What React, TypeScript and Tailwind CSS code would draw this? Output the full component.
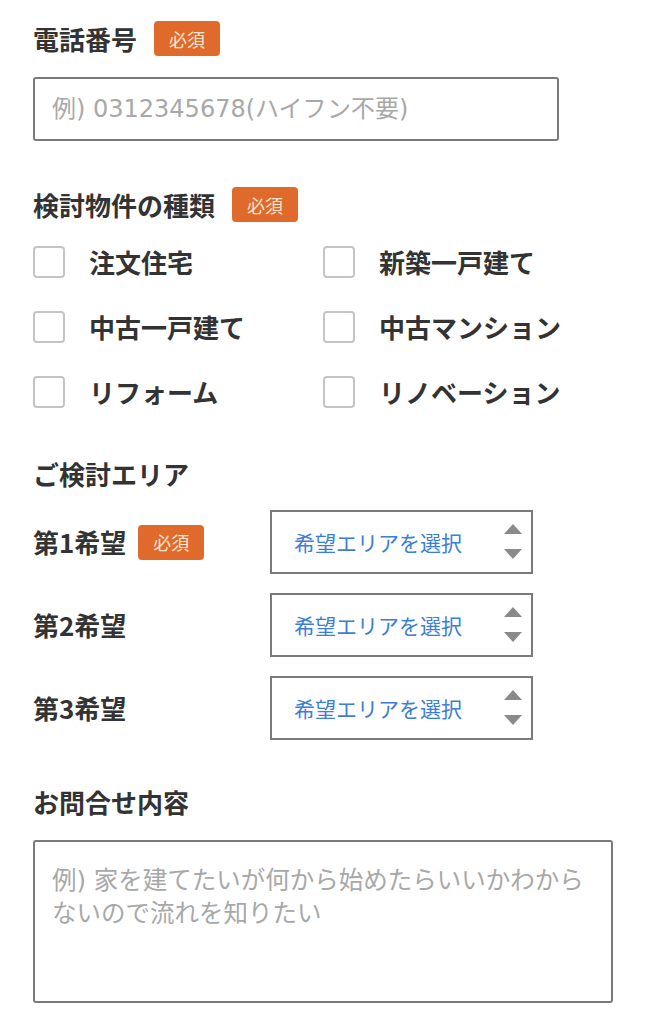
import React from "react";

const font = { fontFamily: '"Noto Sans CJK JP", "Noto Sans", sans-serif' };
const phFont = { fontFamily: '"DejaVu Sans", "Noto Sans CJK JP", sans-serif' };

function Badge() {
  return (
    <span className="inline-flex h-[35px] w-[66px] items-center justify-center rounded-[4px] bg-[#e06a2c] text-[18px] leading-none text-[#fde6d3]">
      必須
    </span>
  );
}

function Checkbox({ label }: { label: string }) {
  return (
    <label className="flex h-[65px] items-center">
      <span className="h-[32px] w-[32px] shrink-0 rounded-[4px] border-[2px] border-[#c4c4c4] bg-white" />
      <span className="ml-[24px] text-[26px] font-bold leading-none text-[#333]">{label}</span>
    </label>
  );
}

function Select() {
  return (
    <div className="flex h-[64px] w-[263px] items-center justify-between border-[2px] border-[#7a7a7a] bg-white pl-[22px] pr-[9px]">
      <span className="text-[21px] leading-none text-[#3b7ed6]">希望エリアを選択</span>
      <svg width="18" height="36" viewBox="0 0 18 36">
        <polygon points="9,0 18,10 0,10" fill="#8a8a8a" />
        <polygon points="0,25 18,25 9,35" fill="#8a8a8a" />
      </svg>
    </div>
  );
}

export default function App() {
  const items = ["注文住宅", "新築一戸建て", "中古一戸建て", "中古マンション", "リフォーム", "リノベーション"];
  return (
    <div className="min-h-[1024px] w-[646px] bg-white pl-[33px] pt-[21px]" style={font}>
      <div className="flex items-center">
        <span className="text-[26px] font-bold leading-none text-[#333]">電話番号</span>
        <span className="ml-[17px]"><Badge /></span>
      </div>
      <input
        className="mt-[21px] block h-[64px] w-[526px] rounded-[3px] border-[2px] border-[#7a7a7a] bg-white px-[17px] text-[24px] text-[#333] outline-none placeholder:text-[#a8a8a8]"
        style={phFont}
        placeholder="例) 0312345678(ハイフン不要)"
      />

      <div className="mt-[46px] flex items-center">
        <span className="text-[26px] font-bold leading-none text-[#333]">検討物件の種類</span>
        <span className="ml-[17px]"><Badge /></span>
      </div>
      <div className="mt-[7px] grid w-[580px] grid-cols-[290px_290px]">
        {items.map((t) => (
          <Checkbox key={t} label={t} />
        ))}
      </div>

      <div className="mt-[37px] text-[26px] font-bold leading-none text-[#333]">ご検討エリア</div>

      <div className="mt-[23px] flex flex-col gap-[19px]">
        {["第1希望", "第2希望", "第3希望"].map((t, i) => (
          <div key={t} className="flex items-center">
            <div className="flex w-[237px] items-center">
              <span className="text-[26px] font-bold leading-none text-[#333]">{t}</span>
              {i === 0 && <span className="ml-[12px]"><Badge /></span>}
            </div>
            <Select />
          </div>
        ))}
      </div>

      <div className="mt-[49px] text-[26px] font-bold leading-none text-[#333]">お問合せ内容</div>
      <textarea
        className="mt-[25px] block h-[163px] w-[580px] resize-none rounded-[3px] border-[2px] border-[#7a7a7a] bg-white pl-[17px] pr-[4px] pt-[22px] text-[24.5px] leading-[33px] text-[#333] outline-none placeholder:text-[#a8a8a8]"
        style={phFont}
        placeholder={"例) 家を建てたいが何から始めたらいいかわから\nないので流れを知りたい"}
      />
    </div>
  );
}
